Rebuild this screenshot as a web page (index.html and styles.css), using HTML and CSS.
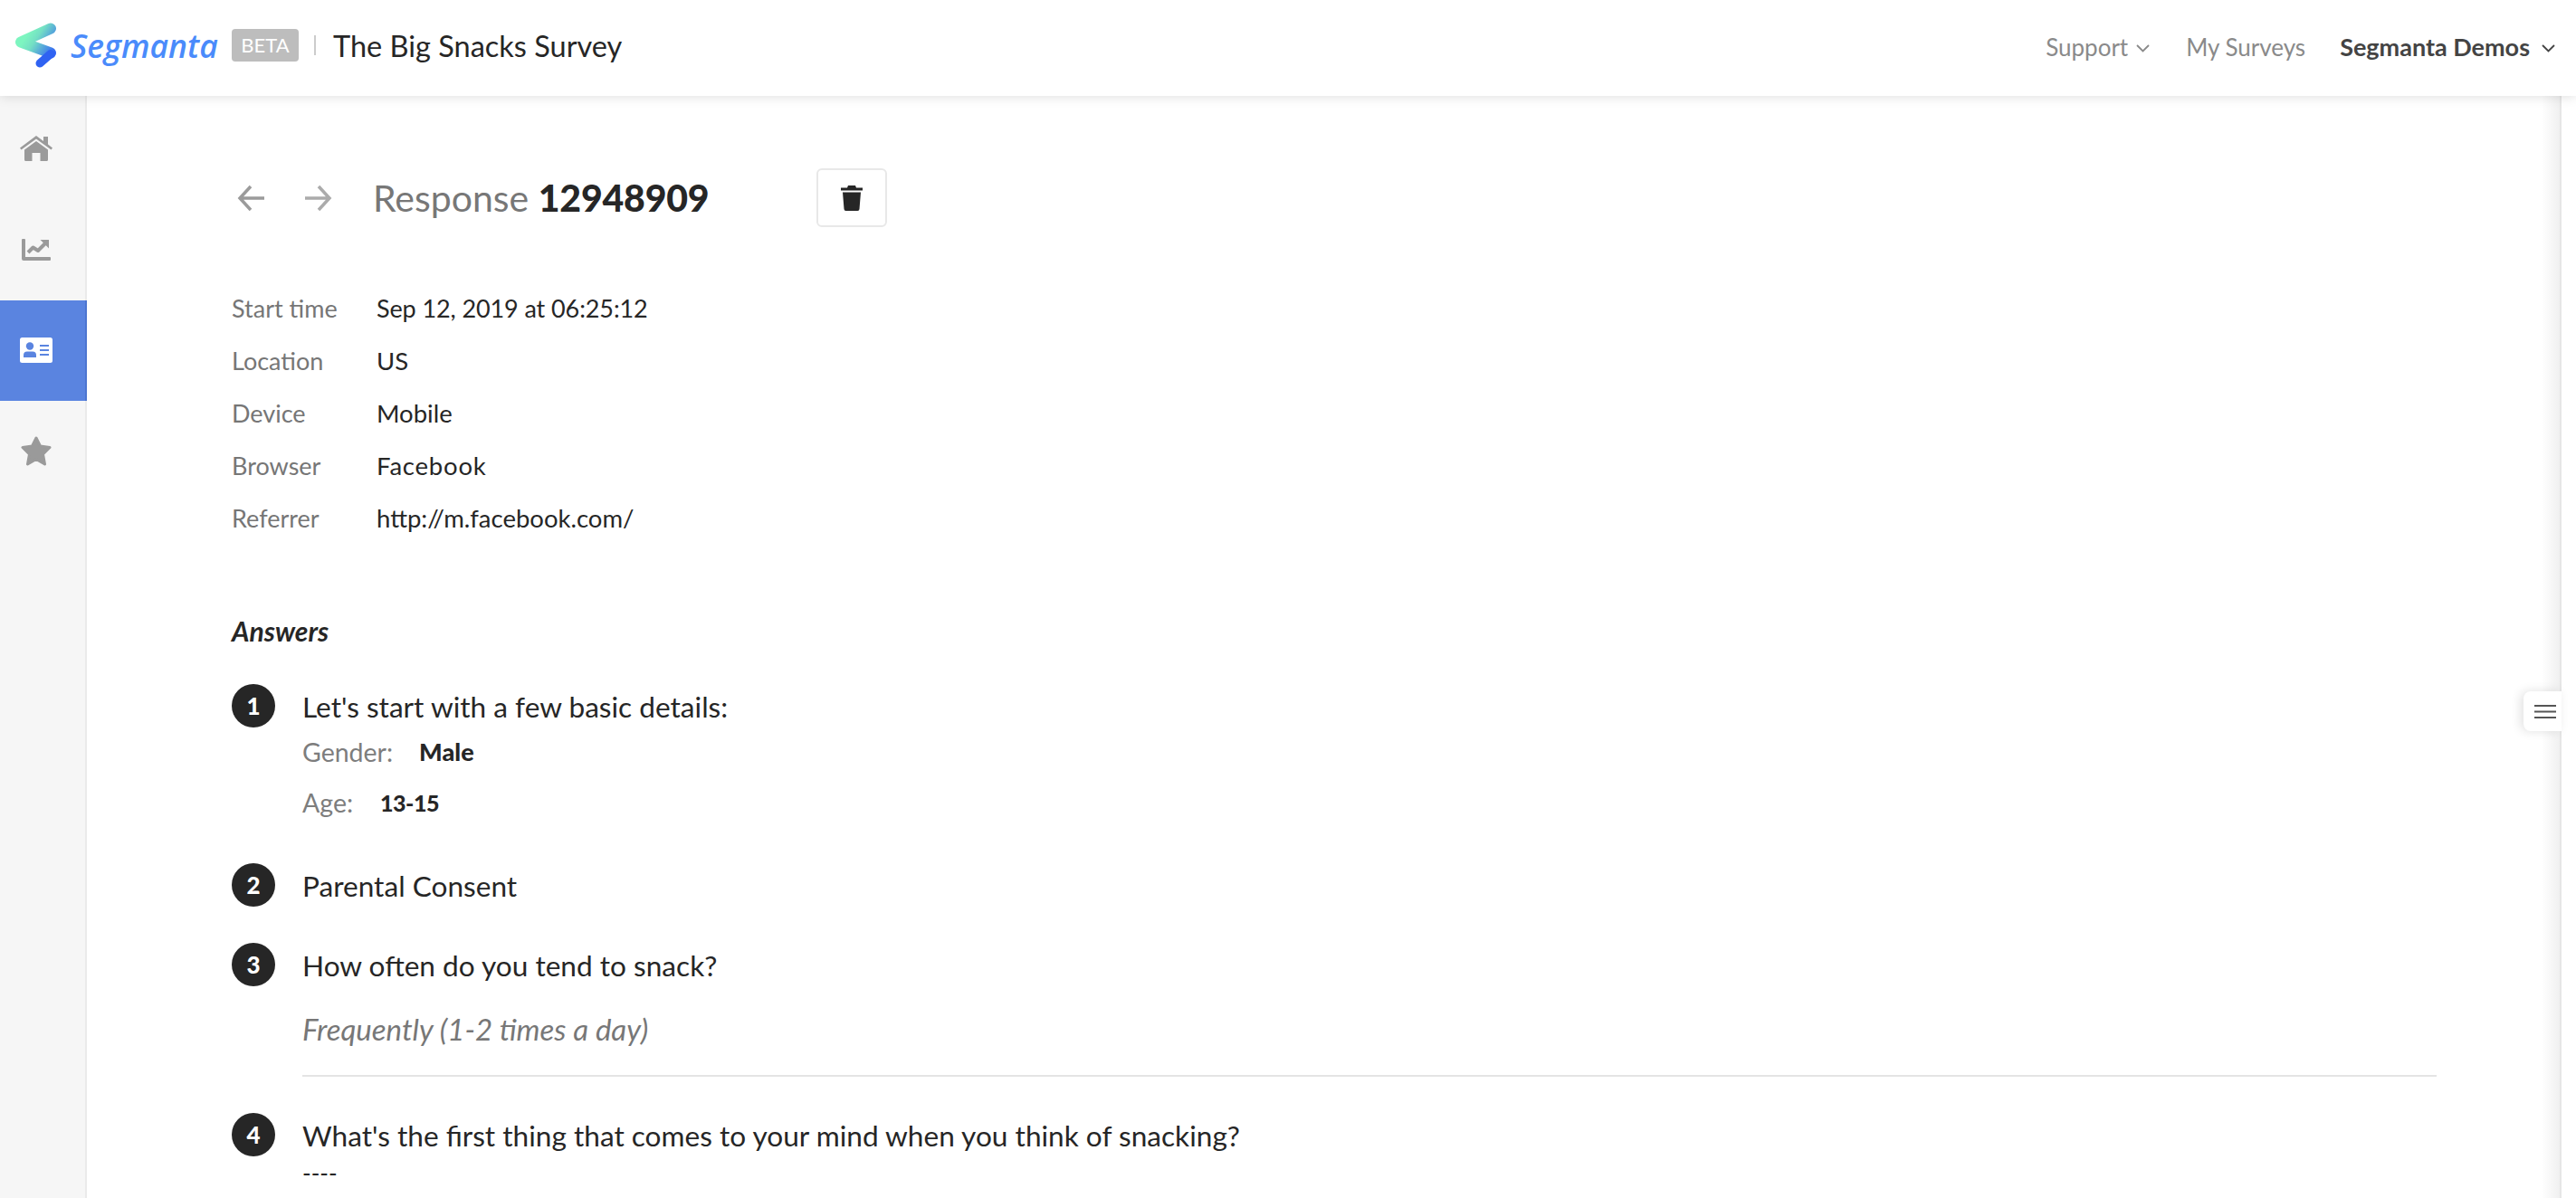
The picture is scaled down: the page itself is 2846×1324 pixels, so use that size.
FILE: index.html
```html
<!DOCTYPE html>
<html lang="en">
<head>
<meta charset="utf-8">
<title>The Big Snacks Survey</title>
<link rel="stylesheet" href="styles.css">
</head>
<body>
<header class="topbar">
  <div class="brand">
    <svg class="logo" viewBox="0 0 48 50" width="48" height="50">
      <defs>
        <linearGradient id="lg1" gradientUnits="userSpaceOnUse" x1="12" y1="18" x2="42" y2="38">
          <stop offset="0" stop-color="#7df5c0"/>
          <stop offset="0.3" stop-color="#74dfc4"/>
          <stop offset="1" stop-color="#3264f5"/>
        </linearGradient>
      </defs>
      <path d="M41 6.500 L8 21.500 L41 33.500" fill="none" stroke="url(#lg1)" stroke-width="12" stroke-linecap="round" stroke-linejoin="round"/>
      <path d="M41 34.500 L29 45" fill="none" stroke="#2f62f2" stroke-width="9" stroke-linecap="round"/>
    </svg>
    <span class="wordmark">Segmanta</span>
    <span class="beta">BETA</span>
    <span class="sep"></span>
    <span class="survey">The Big Snacks Survey</span>
  </div>
  <nav class="topnav">
    <span class="navitem support">Support
      <svg class="chev" viewBox="0 0 15 9" width="15" height="9"><path d="M1 1l6.500 6.500L14 1" fill="none" stroke="currentColor" stroke-width="1.800"/></svg>
    </span>
    <span class="navitem surveys">My Surveys</span>
    <span class="navitem account">Segmanta Demos
      <svg class="chev" viewBox="0 0 15 9" width="15" height="9"><path d="M1 1l6.500 6.500L14 1" fill="none" stroke="currentColor" stroke-width="1.800"/></svg>
    </span>
  </nav>
</header>

<div class="shell">
  <aside class="sidebar">
    <a class="side-item">
      <svg viewBox="0 0 36 28" width="36" height="28"><path fill="#9a9a9a" d="M18 0 L26 6 V1 H31 V9.500 L36 13.500 L34.500 15.500 L18 3.500 L1.500 15.500 L0 13.500 Z M18 6 L31 15.500 V26.500 Q31 28 29.500 28 H22.500 V19 H13.500 V28 H6.500 Q5 28 5 26.500 V15.500 Z"/></svg>
    </a>
    <a class="side-item">
      <svg viewBox="0 0 32 24" width="32" height="24"><path fill="#9a9a9a" d="M0 1 Q0 0 1 0 H3 Q4 0 4 1 V20 H31 Q32 20 32 21 V23 Q32 24 31 24 H2 Q0 24 0 22 Z"/><path fill="none" stroke="#9a9a9a" stroke-width="4" stroke-linejoin="round" d="M7 15 L12.500 9.500 L18 13 L26 5"/><path fill="#9a9a9a" d="M20.500 1 H30 V10.500 Z"/></svg>
    </a>
    <a class="side-item active">
      <svg viewBox="0 0 36 28" width="36" height="28"><rect width="36" height="28" rx="2.500" fill="#fff"/><circle cx="11" cy="9.500" r="4.200" fill="#5a84e0"/><path fill="#5a84e0" d="M4 22 V19.500 Q4 15.500 8 15.500 H14 Q18 15.500 18 19.500 V22 Z"/><path fill="#5a84e0" d="M22 8 H32 V10 H22 Z M22 13 H32 V15 H22 Z M22 18 H32 V20 H22 Z"/></svg>
    </a>
    <a class="side-item">
      <svg viewBox="0 0 34 33" width="34" height="33"><path fill="#9a9a9a" stroke="#9a9a9a" stroke-width="3" stroke-linejoin="round" d="M17 2 L21.500 11 L32 12.500 L24.500 20 L26.500 31 L17 25.500 L7.500 31 L9.500 20 L2 12.500 L12.500 11 Z"/></svg>
    </a>
  </aside>

  <main class="content">
    <div class="titlebar">
      <svg class="arrow" viewBox="0 0 32 30" width="32" height="30"><path d="M30 15 H3 M15 2 L3 15 L15 28" fill="none" stroke="#9b9b9b" stroke-width="3.500"/></svg>
      <svg class="arrow next" viewBox="0 0 32 30" width="32" height="30"><path d="M2 15 H29 M17 2 L29 15 L17 28" fill="none" stroke="#ababab" stroke-width="3.500"/></svg>
      <h1 class="title">Response <b>12948909</b></h1>
      <button class="trash" type="button" aria-label="Delete">
        <svg viewBox="0 0 24 28" width="24" height="28"><path fill="#262626" d="M8 0 H16 L17 2.500 H24 V5.500 H0 V2.500 H7 Z M2 7.500 H22 L20.500 26 Q20.400 28 18.500 28 H5.500 Q3.600 28 3.500 26 Z"/></svg>
      </button>
    </div>

    <dl class="meta">
      <div class="meta-row"><dt>Start time</dt><dd class="stamp">Sep 12, 2019 at 06:25:12</dd></div>
      <div class="meta-row"><dt>Location</dt><dd>US</dd></div>
      <div class="meta-row"><dt>Device</dt><dd>Mobile</dd></div>
      <div class="meta-row"><dt>Browser</dt><dd class="wide">Facebook</dd></div>
      <div class="meta-row"><dt>Referrer</dt><dd>http://m.facebook.com/</dd></div>
    </dl>

    <h2 class="answers">Answers</h2>

    <section class="q q1">
      <span class="num">1</span>
      <div class="q-body">
        <p class="q-text">Let's start with a few basic details:</p>
        <p class="field f-gender"><span>Gender:</span><b>Male</b></p>
        <p class="field f-age"><span>Age:</span><b>13-15</b></p>
      </div>
    </section>

    <section class="q q2">
      <span class="num">2</span>
      <div class="q-body"><p class="q-text">Parental Consent</p></div>
    </section>

    <section class="q q3">
      <span class="num">3</span>
      <div class="q-body">
        <p class="q-text">How often do you tend to snack?</p>
        <p class="reply">Frequently (1-2 times a day)</p>
        <hr class="rule">
      </div>
    </section>

    <section class="q q4">
      <span class="num">4</span>
      <div class="q-body">
        <p class="q-text">What's the first thing that comes to your mind when you think of snacking?</p>
        <p class="dashes">----</p>
      </div>
    </section>
  </main>
</div>

<button class="drawer" type="button" aria-label="Menu">
  <svg viewBox="0 0 24 16" width="24" height="16"><path fill="#555" d="M0 1 H24 V3 H0 Z M0 7.500 H24 V9.500 H0 Z M0 14 H24 V16 H0 Z"/></svg>
</button>
</body>
</html>
```

FILE: styles.css
```css
* { box-sizing: border-box; }
html, body { height: 100%; }
body {
  margin: 0;
  overflow: hidden;
  background: #fff;
  color: #262626;
  font-family: "Lato", "Liberation Sans", sans-serif;
  display: flex;
  flex-direction: column;
}
p, h1, h2, dl, dd { margin: 0; }

.topbar {
  flex: none;
  height: 106px;
  display: flex;
  align-items: center;
  justify-content: space-between;
  background: #fff;
  box-shadow: 0 1px 12px rgba(0,0,0,.13);
  position: relative;
  z-index: 2;
  padding: 0 23px 6px 15px;
}
.brand { display: flex; align-items: center; }
.logo { display: block; }
.wordmark {
  margin-left: 15px;
  font-family: "Open Sans", sans-serif;
  font-style: italic;
  font-weight: 600;
  font-size: 35.500px;
  color: #4a8bfb;
  width: 163px;
  white-space: nowrap;
}
.beta {
  margin-left: 15px;
  width: 74px;
  height: 36px;
  line-height: 36px;
  text-align: center;
  background: #bdbdbd;
  color: #fff;
  border-radius: 4px;
  font-size: 22px;
}
.sep { width: 2px; height: 22px; background: #ccc; margin: 0 19px 0 17px; }
.survey { font-size: 32.500px; color: #262626; }

.topnav { display: flex; align-items: center; font-size: 26px; color: #8a8a8a; margin-top: 3px; }
.navitem { display: flex; align-items: center; white-space: nowrap; }
.chev { margin-left: 9px; margin-top: 3px; }
.surveys { margin-left: 40px; }
.account { margin-left: 38px; font-weight: 700; font-size: 27px; color: #444; }
.account .chev { margin-left: 13px; }

.shell { flex: 1; display: flex; min-height: 0; }
.sidebar {
  flex: none;
  width: 96px;
  background: #f6f6f6;
  border-right: 2px solid #eaeaea;
  padding-top: 2.500px;
}
.side-item {
  height: 111.500px;
  margin-right: -2px;
  padding-right: 16px;
  display: flex;
  align-items: center;
  justify-content: center;
}
.side-item.active {
  background: #5a84e0;
  border-right: 2px solid #4c75d0;
  padding-right: 14px;
}

.content {
  flex: 1;
  min-width: 0;
  margin-right: 16px;
  padding: 80px 138px 0 160px;
  background: linear-gradient(to left, #e6e6e6 2px, #f0f0f0 2px, #fff 22px);
}
.titlebar { display: flex; align-items: center; height: 65px; margin-left: 6px; }
.arrow { display: block; }
.arrow.next { margin-left: 41px; }
.title { margin-left: 45px; font-size: 41px; font-weight: 400; color: #777; width: 490px; white-space: nowrap; }
.title b { color: #262626; font-weight: 900; letter-spacing: -.2px; }
.trash {
  width: 78px;
  height: 65px;
  padding: 0;
  background: #fff;
  border: 2px solid #e8e8e8;
  border-radius: 6px;
  display: flex;
  align-items: center;
  justify-content: center;
}

.meta { margin-top: 60px; font-size: 27px; }
.meta-row { display: flex; height: 58px; align-items: center; }
.meta dt { width: 160px; color: #767676; }
.meta dd { color: #262626; font-size: 27.500px; }
.meta .stamp { font-size: 27px; letter-spacing: -.1px; }
.meta .wide { letter-spacing: .8px; }

.answers { margin-top: 78px; font-size: 30px; line-height: 36px; font-weight: 700; font-style: italic; color: #262626; }

.q { display: flex; }
.num {
  flex: none;
  width: 48px;
  height: 48px;
  border-radius: 50%;
  background: #262626;
  color: #fff;
  font-size: 26px;
  font-weight: 900;
  line-height: 48px;
  text-align: center;
}
.q-body { margin-left: 30px; flex: 1; }
.q-text { font-size: 31.600px; line-height: 48px; margin-top: 1px; }
.q1 { margin-top: 41px; }
.q2 { margin-top: 47px; }
.q3 { margin-top: 39px; }
.q4 { margin-top: 40px; }
.field { display: flex; font-size: 27px; line-height: 40px; color: #262626; }
.field span { color: #7d7d7d; font-size: 28.500px; }
.field b { font-weight: 900; }
.f-gender { margin-top: 6px; }
.f-gender b { margin-left: 29px; }
.f-age { margin-top: 16px; }
.f-age b { margin-left: 30px; font-size: 25px; letter-spacing: -.5px; }
.reply { margin-top: 22px; font-size: 33px; line-height: 48px; font-style: italic; color: #777; }
.rule { margin: 27px 0 0; height: 2px; border: 0; background: #e4e4e4; }
.dashes { font-size: 26px; line-height: 30px; margin-top: 2px; }

.drawer {
  position: absolute;
  left: 2788px;
  top: 764px;
  width: 42px;
  height: 44px;
  padding: 0 0 0 12px;
  background: #fff;
  border: 0;
  border-radius: 8px 0 0 8px;
  box-shadow: -3px 0 12px rgba(0,0,0,.12);
  display: flex;
  align-items: center;
  justify-content: flex-start;
  z-index: 3;
}
```
